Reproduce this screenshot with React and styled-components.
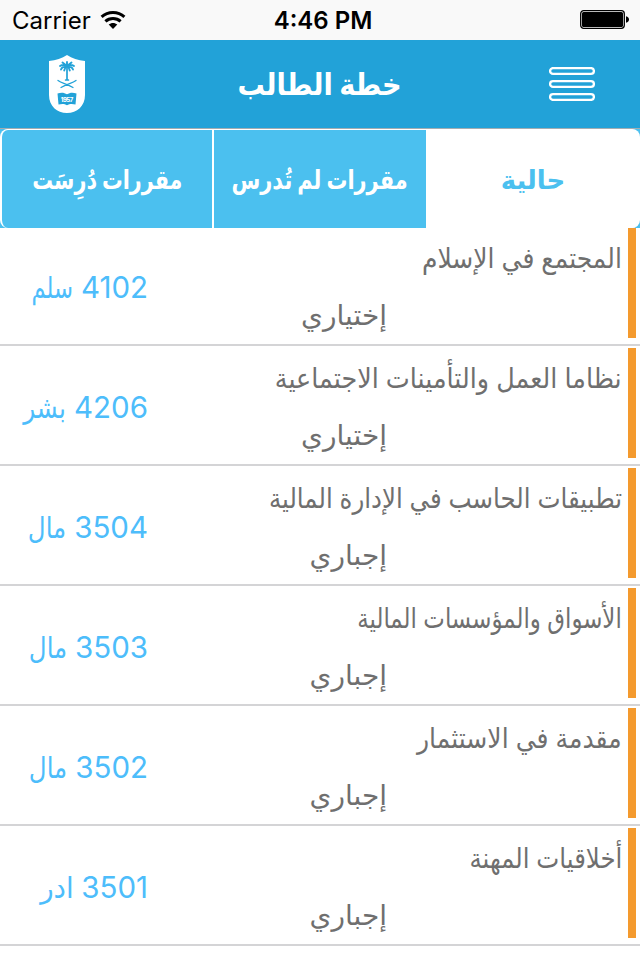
import React, { useState } from "react";
import { createGlobalStyle, styled } from "styled-components";

const tabs = [
	{ id: "current", label: "حالية", stretch: 1 },
	{ id: "remaining", label: "مقررات لم تُدرس", stretch: 0.804 },
	{ id: "done", label: "مقررات دُرِسَت", stretch: 0.797 },
];

// stretch : 글자 폭 비율
const courses = [
	{ name: "المجتمع في الإسلام", stretch: 0.893, kind: "إختياري", number: "4102", dept: "سلم", deptStretch: 0.77 },
	{ name: "نظاما العمل والتأمينات الاجتماعية", stretch: 0.909, kind: "إختياري", number: "4206", dept: "بشر", deptStretch: 0.84 },
	{ name: "تطبيقات الحاسب في الإدارة المالية", stretch: 0.874, kind: "إجباري", number: "3504", dept: "مال", deptStretch: 0.83 },
	{ name: "الأسواق والمؤسسات المالية", stretch: 0.817, kind: "إجباري", number: "3503", dept: "مال", deptStretch: 0.83 },
	{ name: "مقدمة في الاستثمار", stretch: 0.895, kind: "إجباري", number: "3502", dept: "مال", deptStretch: 0.83 },
	{ name: "أخلاقيات المهنة", stretch: 0.872, kind: "إجباري", number: "3501", dept: "ادر", deptStretch: 0.94 },
];

const WifiIcon = () => (
	<svg width="26" height="20" viewBox="0 0 26 20">
		<g fill="none" stroke="#000" strokeWidth="3">
			<path d="M1.6 6.8C8 .9 18 .9 24.4 6.8" />
			<path d="M5.4 11.3C9.6 7.4 16.4 7.4 20.6 11.3" />
		</g>
		<path d="M8.7 14.5C11.2 12.4 14.8 12.4 17.3 14.5L13 19Z" />
	</svg>
);

const BatteryIcon = () => (
	<svg width="50" height="20" viewBox="0 0 50 20">
		<rect x="0.7" y="0.7" width="43.6" height="17.6" rx="3" fill="none" stroke="#000" strokeWidth="1.3" />
		<rect x="2" y="2" width="41" height="15" rx="1.5" />
		<path d="M46 6.2C48 6.6 49 8 49 9.5S48 12.4 46 12.8Z" />
	</svg>
);

// 대학 로고
const CrestIcon = () => (
	<svg width="36" height="58" viewBox="0 0 36 58">
		<path fill="#fff" d="M18 0C23 3 29 5.5 36 6V40C36 51 28 58 18 58S0 51 0 40V6C7 5.5 13 3 18 0Z" />
		<g fill="none" stroke="#22a2d8" strokeLinecap="round">
			<path strokeWidth="1.7" d="M18 11V24.5M16.6 25H19.4" />
			<path
				strokeWidth="1.9"
				d="M18 11V7M18 11L13.5 7.5M18 11L22.5 7.5M18 11C15 9.5 13 9.7 11 11M18 11C21 9.5 23 9.7 25 11M18 11C14.5 11.5 12.7 12.5 12 14.5M18 11C21.5 11.5 23.3 12.5 24 14.5M18 11C16.5 12 15.5 13.5 15.2 15.5M18 11C19.5 12 20.5 13.5 20.8 15.5"
			/>
			<path strokeWidth="1.3" d="M9 25.5C13 28.5 18 28.5 24 32.5M27 25.5C23 28.5 18 28.5 12 32.5" />
		</g>
		<path fill="#22a2d8" d="M8.5 38.5C12 37.3 15 37.3 18 39.3C21 37.3 24 37.3 27.5 38.5L26.5 49.5C23 48.5 20.5 48.7 18 50.3C15.5 48.7 13 48.5 9.5 49.5Z" />
		<text x="18" y="46.5" fill="#fff" fontFamily="Inter, sans-serif" fontSize="6" fontWeight="800" textAnchor="middle" textLength="12.5">
			1957
		</text>
	</svg>
);

const MenuIcon = () => (
	<svg width="46" height="34" viewBox="0 0 46 34">
		<g fill="none" stroke="#fff" strokeWidth="2.3">
			<rect x="1.1" y="1.1" width="43.8" height="5.8" rx="2.9" />
			<rect x="1.1" y="14.1" width="43.8" height="5.8" rx="2.9" />
			<rect x="1.1" y="27.1" width="43.8" height="5.8" rx="2.9" />
		</g>
	</svg>
);

const GlobalStyle = createGlobalStyle`
	* {
		box-sizing: border-box;
	}
	body {
		margin: 0;
		background: #fff;
		font-family: Inter, "DejaVu Sans", sans-serif;
	}
	svg {
		display: block;
	}
`;

const Screen = styled.div`
	width: 640px;
	height: 960px;
	overflow: hidden;
	background: #fff;
`;

const StatusBar = styled.div`
	display: grid;
	grid-template-columns: 1fr auto 1fr;
	align-items: center;
	height: 40px;
	padding: 0 10px 0 12px;
	background: #f9f9f9;
	color: #000;
	font-size: 24px;
`;
const Carrier = styled.div`
	display: flex;
	align-items: center;
	gap: 9px;
`;
const Time = styled.div`
	padding-left: 4px;
	font-weight: 600;
`;
const Battery = styled.div`
	display: flex;
	justify-content: flex-end;
`;

const Header = styled.header`
	display: grid;
	grid-template-columns: 36px 1fr 46px;
	align-items: center;
	height: 88px;
	padding: 0 45px 0 49px;
	background: #22a2d8;
`;
const Title = styled.h1`
	margin: 0;
	padding-left: 6px;
	color: #fff;
	font-size: 30px;
	font-weight: 700;
	text-align: center;
	direction: rtl;
`;
const MenuButton = styled.button`
	padding: 0;
	border: 0;
	background: none;
`;

// 글자 폭 조절
const Label = styled.span`
	display: inline-block;
	transform: scaleX(${({ $stretch }) => $stretch});
	transform-origin: ${({ $origin }) => $origin || "center"};
`;

const TabBar = styled.div`
	height: 100px;
	border-top: 1px solid #a3adb2;
	background: #4bc0ef;
`;
const TabGroup = styled.div`
	display: grid;
	grid-template-columns: 210px 212px 210px;
	column-gap: 2px;
	direction: rtl;
	height: 99px;
	border: 2px solid #fff;
	border-width: 1px 2px 0;
	border-radius: 8px;
	background: #fff;
	overflow: hidden;
`;
const Tab = styled.button`
	display: flex;
	align-items: center;
	justify-content: center;
	padding: 0;
	border: 0;
	background: ${({ $active }) => ($active ? "#fff" : "#4bc0ef")};
	color: ${({ $active }) => ($active ? "#4bc0ef" : "#fff")};
	font-family: inherit;
	font-size: 26px;
	font-weight: 700;
	white-space: nowrap;
`;

const Row = styled.div`
	display: flex;
	direction: rtl;
	height: 118px;
	margin-bottom: 2px;
	padding-right: 4px;
	border-bottom: 2px solid #d4d4d6;
	white-space: nowrap;
`;
const Marker = styled.div`
	width: 8px;
	height: 110px;
	background: #f49a2e;
`;
const Details = styled.div`
	width: 480px;
	padding: 2px 6px 0 0;
	color: #6f6f6f;
	font-size: 28px;
	line-height: 57px;
`;
const Name = styled.div``;
const Kind = styled.div`
	padding-right: 235px;
`;
const Code = styled.div`
	display: flex;
	gap: 8px;
	line-height: 118px;
	color: #4dbdfb;
	font-size: 29.5px;
`;

// 학생 수강 계획 화면
const App = () => {
	const [activeTab, setActiveTab] = useState("current");

	return (
		<Screen>
			<GlobalStyle />
			<StatusBar>
				<Carrier>
					Carrier <WifiIcon />
				</Carrier>
				<Time>4:46 PM</Time>
				<Battery>
					<BatteryIcon />
				</Battery>
			</StatusBar>
			<Header>
				<CrestIcon />
				<Title>
					<Label $stretch={0.906}>خطة الطالب</Label>
				</Title>
				<MenuButton>
					<MenuIcon />
				</MenuButton>
			</Header>
			<TabBar>
				<TabGroup>
					{tabs.map((tab) => (
						<Tab
							key={tab.id}
							$active={tab.id === activeTab}
							onClick={() => setActiveTab(tab.id)}
						>
							<Label $stretch={tab.stretch}>{tab.label}</Label>
						</Tab>
					))}
				</TabGroup>
			</TabBar>
			{courses.map((course) => (
				<Row key={course.number}>
					<Marker />
					<Details>
						<Name>
							<Label $stretch={course.stretch} $origin="right">
								{course.name}
							</Label>
						</Name>
						<Kind>{course.kind}</Kind>
					</Details>
					<Code>
						<span>{course.number}</span>
						<Label $stretch={course.deptStretch} $origin="right">
							{course.dept}
						</Label>
					</Code>
				</Row>
			))}
		</Screen>
	);
};

export default App;
